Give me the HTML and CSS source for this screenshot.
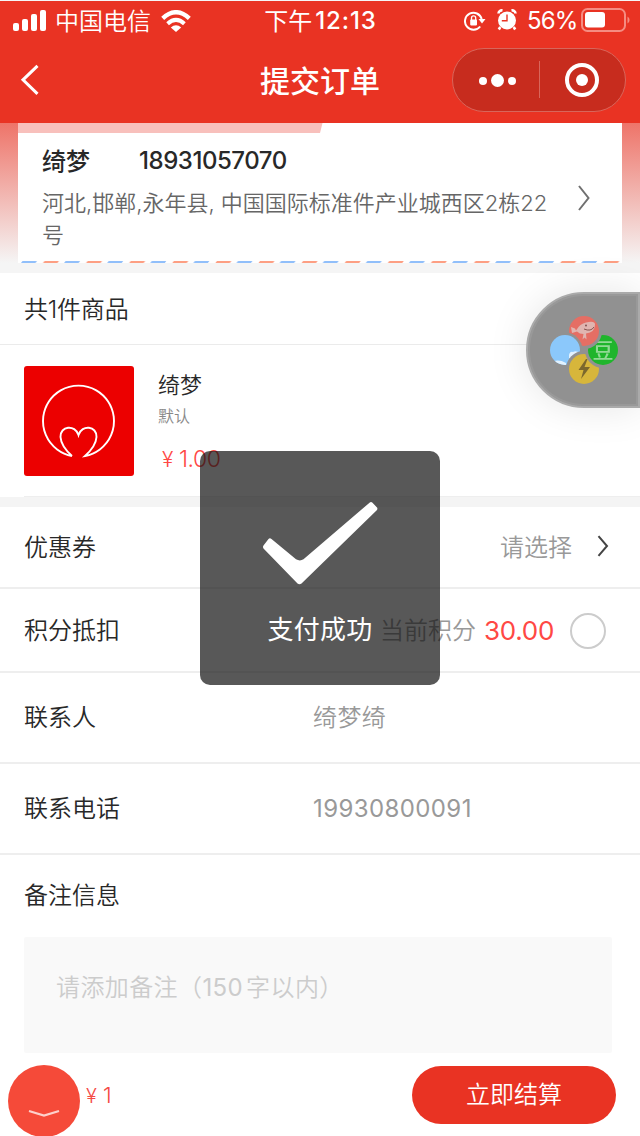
FILE: index.html
```html
<!DOCTYPE html>
<html lang="zh-CN">
<head>
<meta charset="utf-8">
<title>提交订单</title>
<link rel="stylesheet" href="styles.css">
</head>
<body>
<main class="app">
  <header class="header">
    <div class="status">
      <div class="status-left">
        <svg class="signal" width="34" height="22" viewBox="0 0 34 22" fill="#fff"><rect x="0" y="13" width="6" height="8" rx="2"/><rect x="9" y="9" width="6" height="12" rx="2"/><rect x="18" y="4" width="6" height="17" rx="2"/><rect x="27" y="0" width="6" height="21" rx="2"/></svg>
        <span class="carrier">中国电信</span>
        <svg class="wifi" width="30" height="22" viewBox="0 0 30 22" fill="none" stroke="#fff"><path d="M1.700 8.300Q15-3.800 28.300 8.300" stroke-width="4.400"/><path d="M6.600 13.700Q15 6.200 23.400 13.700" stroke-width="4"/><path d="M15 22L9.800 17.500Q15 13 20.200 17.500Z" fill="#fff" stroke="none"/></svg>
      </div>
      <div class="clock"><span class="clock-cn">下午</span><span class="clock-num">12:13</span></div>
      <div class="status-right">
        <svg width="22" height="20" viewBox="0 0 22 20"><path d="M16.200 15.500A8.500 8.500 0 1 1 17.700 8" fill="none" stroke="#fff" stroke-width="2"/><path d="M14.500 8h7l-3.500 4.500z" fill="#fff"/><rect x="6.200" y="8.600" width="6.800" height="5.800" rx=".8" fill="#fff"/><path d="M7.500 9V7a2.100 2.100 0 0 1 4.200 0v2" fill="none" stroke="#fff" stroke-width="1.300"/></svg>
        <svg class="alarm" width="20" height="22" viewBox="0 0 20 22"><circle cx="10" cy="11.500" r="9" fill="#fff"/><path d="M1.500 4.500A3.300 3.300 0 0 1 5.500 1.500M14.500 1.500A3.300 3.300 0 0 1 18.500 4.500M3.300 18L1.800 20.500M16.700 18l1.500 2.500" stroke="#fff" stroke-width="2.600" fill="none"/><path d="M10 5.500v6.300H4.800" fill="none" stroke="#e93323" stroke-width="1.400"/></svg>
        <span class="percent">56%</span>
        <svg class="battery" width="49" height="24" viewBox="0 0 49 24"><rect x="1" y="1" width="43" height="22" rx="5.500" fill="none" stroke="#f58c82" stroke-width="2"/><rect x="4" y="4" width="20" height="15.500" rx="3" fill="#fff"/><path d="M46.500 8.500a4 4 0 0 1 0 7z" fill="#f58c82"/></svg>
      </div>
    </div>
    <div class="nav">
      <svg class="back" width="20" height="32" viewBox="0 0 20 32"><path d="M17.500 1.800L3 15.800l14.500 14" fill="none" stroke="#fff" stroke-width="3"/></svg>
      <h1 class="nav-title">提交订单</h1>
      <div class="capsule">
        <svg width="172" height="62" viewBox="0 0 172 62" fill="#fff"><circle cx="30" cy="32" r="4"/><circle cx="44.500" cy="31.500" r="6.500"/><circle cx="59" cy="32" r="4"/><path d="M86.500 12v37" stroke="#d8665b"/><circle cx="129" cy="31" r="15" fill="none" stroke="#fff" stroke-width="4"/><circle cx="129" cy="31" r="6"/></svg>
      </div>
    </div>
  </header>

  <section class="address-zone">
    <div class="address">
      <svg class="address-strip" width="604" height="10" viewBox="0 0 604 10"><path d="M0 0H304.500L302 10H0Z" fill="#f8c0bc"/></svg>
      <div class="address-body">
        <div class="address-text">
          <div class="person"><span class="person-name">绮梦</span><span class="person-phone">18931057070</span></div>
          <div class="street">河北,邯郸,永年县, <span class="street-area">中国国际标准件产业城西区2栋22</span><br>号</div>
        </div>
        <svg class="address-arrow" width="14" height="26" viewBox="0 0 14 26"><path d="M2 1l9.500 12L2 25" fill="none" stroke="#707070" stroke-width="2"/></svg>
      </div>
      <svg class="address-edge" width="604" height="2" viewBox="0 0 604 2"><defs><pattern id="dash" x="3" y="0" width="43.100" height="2" patternUnits="userSpaceOnUse"><path d="M1.500 0H16L14.500 2H0Z" fill="#91bffa"/><path d="M23.500 0H38L36.500 2H22Z" fill="#fd9f83"/></pattern></defs><rect width="604" height="2" fill="url(#dash)"/></svg>
    </div>
  </section>

  <section class="goods">
    <div class="goods-count">共1件商品</div>
    <div class="product">
      <svg class="product-image" width="110" height="110" viewBox="0 0 110 110"><rect width="110" height="110" rx="3" fill="#ec0000"/><path d="M48 90A35.500 35.500 0 1 1 61 90Q72 80 72.500 71C73 60 58 58 54.500 69C51 58 36 60 36.500 71Q37 80 48 90" fill="none" stroke="#fff" stroke-width="1.900"/></svg>
      <div class="product-info">
        <div class="product-name">绮梦</div>
        <div class="product-spec">默认</div>
        <div class="product-price"><span class="yen">¥</span>1.00</div>
      </div>
    </div>
  </section>

  <section class="form">
    <div class="row row-coupon">
      <span class="label">优惠券</span>
      <span class="choose">请选择</span>
      <svg class="row-arrow" width="12" height="22" viewBox="0 0 12 22"><path d="M1.500 1.200L10 11 1.500 20.800" fill="none" stroke="#444" stroke-width="2"/></svg>
    </div>
    <div class="row row-points">
      <span class="label">积分抵扣</span>
      <span class="points-label">当前积分</span>
      <span class="points">30.00</span>
      <span class="radio"></span>
    </div>
    <div class="row row-contact"><span class="label label-wide">联系人</span><span class="value">绮梦绮</span></div>
    <div class="row row-phone"><span class="label label-wide">联系电话</span><span class="value value-phone">19930800091</span></div>
    <div class="remark">
      <div class="label">备注信息</div>
      <div class="remark-box">请添加备注<span class="paren">（</span><span class="remark-num">150</span>字以内<span class="paren-close">）</span></div>
    </div>
  </section>

  <footer class="footer">
    <svg class="home" width="72" height="72" viewBox="0 0 72 72"><circle cx="36" cy="36" r="36" fill="#f54a39"/><path d="M21 46l15 4.500L51 46" fill="none" stroke="#fdd0cb" stroke-width="2.300"/></svg>
    <span class="total"><span class="total-yen">¥</span>1</span>
    <span class="pay">立即结算</span>
  </footer>

  <aside class="floating">
    <svg width="112" height="112" viewBox="528 294 112 112">
      <defs>
        <mask id="cut-red" maskUnits="userSpaceOnUse" x="520" y="290" width="120" height="120"><rect x="520" y="290" width="120" height="120" fill="#fff"/><circle cx="565" cy="350" r="17.500"/></mask>
        <mask id="cut-green" maskUnits="userSpaceOnUse" x="520" y="290" width="120" height="120"><rect x="520" y="290" width="120" height="120" fill="#fff"/><circle cx="584" cy="331" r="18"/></mask>
        <mask id="cut-yellow" maskUnits="userSpaceOnUse" x="520" y="290" width="120" height="120"><rect x="520" y="290" width="120" height="120" fill="#fff"/><circle cx="603" cy="350" r="18"/></mask>
        <mask id="cut-blue" maskUnits="userSpaceOnUse" x="520" y="290" width="120" height="120"><rect x="520" y="290" width="120" height="120" fill="#fff"/><circle cx="584" cy="369" r="18"/></mask>
        <clipPath id="blue-disc"><circle cx="565" cy="350" r="15"/></clipPath>
      </defs>
      <g mask="url(#cut-red)"><circle cx="584" cy="331" r="15" fill="#e56e64"/><path d="M571 327l4 1.500 1 2q4-7 10-8 9-2 9 2 0 8-9 9l.5 6-2-2-2 2 1-5.500q-4 0-6.500-2.500l-5 1.500z" fill="#e0b5b0"/><path d="M584 329q7 3 10-2" fill="none" stroke="#85534f"/><circle cx="586" cy="325.500" r=".9" fill="#774a48"/></g>
      <g mask="url(#cut-blue)"><circle cx="565" cy="350" r="15" fill="#8bc8fb"/><path clip-path="url(#blue-disc)" d="M554 361q6-1.500 12 2v3h-12zM569 355q1-4 4-3 3-2 7 1l-4 5h-7z" fill="#e2f2ff"/></g>
      <g mask="url(#cut-green)"><circle cx="603" cy="350" r="15" fill="#1fb52c"/><text x="603" y="357.500" class="bean" text-anchor="middle">豆</text></g>
      <g mask="url(#cut-yellow)"><circle cx="584" cy="369" r="15" fill="#d7b63b"/><path d="M586 359l-7.500 11h5l-2.500 9 9-12h-5.500l3-8z" fill="#7b682d"/></g>
    </svg>
  </aside>

  <div class="toast">
    <svg class="check" width="116" height="84" viewBox="0 0 116 84"><path d="M1.500 43.500L6.500 37Q7.800 35.500 9.500 37L34 57.300Q38 59.500 41.500 57.300L107.500 .7Q109 -.5 110.500 .7L115 5.500Q116 7 114.500 8.500L39.500 81.500Q37.500 83 35.500 81.500L1.500 46.500Q.5 45 1.500 43.500Z" fill="#fff"/></svg>
    <div class="toast-text">支付成功</div>
  </div>
</main>
</body>
</html>
```
FILE: styles.css
```css
* { box-sizing: border-box; }
body { margin: 0; background: #fff; font-family: Inter, "Noto Sans CJK SC", sans-serif; font-weight: 350; color: #282828; }
svg { display: block; flex: none; }
span, div { white-space: nowrap; }
.app { position: relative; width: 640px; height: 1136px; overflow: hidden; display: flex; flex-direction: column; background: #fff; }
.header { height: 123px; border-top: 1px solid #f6f6f6; background: #e93323; color: #fff; flex: none; }
.status { height: 40px; display: grid; grid-template-columns: 1fr auto 1fr; align-items: center; padding: 0 11px 0 13px; }
.status-left { display: flex; align-items: center; }
.signal { margin-bottom: 1px; }
.carrier { margin-left: 8px; font-size: 24px; line-height: 36px; width: 97px; padding-top: 2px; }
.wifi { margin-left: 9px; }
.clock { display: flex; align-items: center; line-height: 36px; margin-right: 1px; }
.clock-cn { font-size: 24px; font-weight: 400; width: 51px; padding-top: 2px; }
.clock-num { font-size: 24px; font-weight: 500; letter-spacing: .9px; }
.status-right { display: flex; align-items: center; justify-content: flex-end; }
.alarm { margin-left: 11px; margin-bottom: 3px; }
.percent { margin-left: 10px; font-size: 24px; font-weight: 400; line-height: 36px; width: 50px; letter-spacing: -.8px; }
.battery { margin-left: 4px; margin-right: -1px; margin-bottom: 3px; }
.nav { height: 82px; display: grid; grid-template-columns: 1fr auto 1fr; align-items: center; padding: 0 14px 0 20px; }
.nav-title { margin: 0 6px 3px 0; font-size: 30px; line-height: 40px; font-weight: 500; }
.back { margin-bottom: 5px; }
.capsule { justify-self: end; width: 174px; height: 64px; margin-bottom: 4px; border: 1px solid #d8665b; border-radius: 32px; background: #c72c1e; }

.address-zone { height: 150px; flex: none; padding: 0 18px 10px; background: linear-gradient(#ee7469, #f5f5f5 140px); }
.address { height: 140px; background: #fff; display: flex; flex-direction: column; }
.address-body { height: 128px; display: flex; padding: 10px 31px 0 24px; justify-content: space-between; }
.person { display: flex; align-items: center; height: 36px; margin-top: -1px; }
.person-name { width: 97px; font-size: 24px; font-weight: 500; margin-top: -2px; }
.person-phone { font-size: 24px; font-weight: 500; letter-spacing: -.45px; }
.street { margin-top: 9px; font-size: 22px; line-height: 32px; color: #666; }
.address-arrow { margin-top: 42px; }

.goods { height: 234px; flex: none; border-bottom: 10px solid #f4f4f4; }
.goods-count { height: 72px; padding-left: 24px; font-size: 24px; line-height: 73px; border-bottom: 1px solid #ebebeb; letter-spacing: -.2px; }
.product { display: flex; gap: 24px; margin-left: 24px; padding-top: 21px; height: 152px; border-bottom: 1px solid #eee; }
.product-name { font-size: 22px; line-height: 36px; margin-top: 1px; }
.product-spec { font-size: 16px; line-height: 27px; color: #888; }
.product-price { margin-top: 13px; padding-left: 4px; font-size: 23px; line-height: 32px; color: #ff4844; letter-spacing: -.5px; }
.yen { display: inline-block; width: 17px; font-size: 21px; }

.form { flex: none; height: 546px; }
.row { display: flex; align-items: center; padding-left: 24px; border-bottom: 2px solid #eee; }
.label { font-size: 24px; line-height: 36px; }
.row-coupon { height: 82px; }
.row-coupon .label, .row-points .label { padding-top: 2px; }
.choose { margin-left: auto; font-size: 24px; line-height: 36px; color: #999; padding-top: 1px; }
.row-arrow { margin: 0 31px 2px 25px; }
.row-points { height: 84px; }
.points-label { margin-left: auto; font-size: 24px; line-height: 36px; color: #999; padding-top: 2px; }
.points { margin-left: 8px; font-size: 26px; font-weight: 400; color: #ff4844; letter-spacing: -.3px; }
.radio { width: 36px; height: 36px; border: 2px solid #ccc; border-radius: 50%; margin: 1px 34px 0 16px; }
.row-contact, .row-phone { height: 91px; }
.label-wide { width: 289px; }
.value { font-size: 24px; line-height: 36px; color: #999; }
.row-contact .value { padding-top: 1px; letter-spacing: .4px; }
.value-phone { letter-spacing: .4px; font-weight: 400; }
.remark { padding: 23px 28px 0 24px; }
.remark-box { height: 116px; margin-top: 23px; padding: 33px 32px; background: #f9f9f9; color: #ccc; font-size: 24px; line-height: 36px; border-radius: 2px; letter-spacing: .4px; }
.remark-num { padding-right: 3px; font-weight: 400; }
.footer { flex: none; height: 83px; display: flex; align-items: flex-start; padding: 12px 24px 0 8px; }
.total { margin: 14px 0 0 6px; line-height: 32px; color: #f54a45; font-size: 22px; }
.total-yen { display: inline-block; width: 17px; font-size: 20px; }
.pay { margin: 1px 0 0 auto; width: 204px; height: 58px; border-radius: 29px; background: #e93323; color: #fff; font-size: 24px; line-height: 57px; text-align: center; }

.floating { position: absolute; top: 292px; left: 526px; width: 114px; height: 116px; border: 2px solid #aaa; border-radius: 58px 0 0 58px; background: #919191; box-shadow: inset 0 0 0 2px #999, 0 0 40px rgba(0, 0, 0, .1); }
.bean { font-family: "Noto Sans CJK SC", sans-serif; font-size: 21px; font-weight: 500; fill: #91d995; }
.toast { position: absolute; top: 451px; left: 200px; width: 240px; height: 234px; border-radius: 10px; background: rgba(17, 17, 17, .7); color: #fff; display: flex; flex-direction: column; align-items: center; padding-top: 51px; }
.toast-text { margin-top: 24px; font-size: 26px; line-height: 40px; font-weight: 400; letter-spacing: .3px; }
```
